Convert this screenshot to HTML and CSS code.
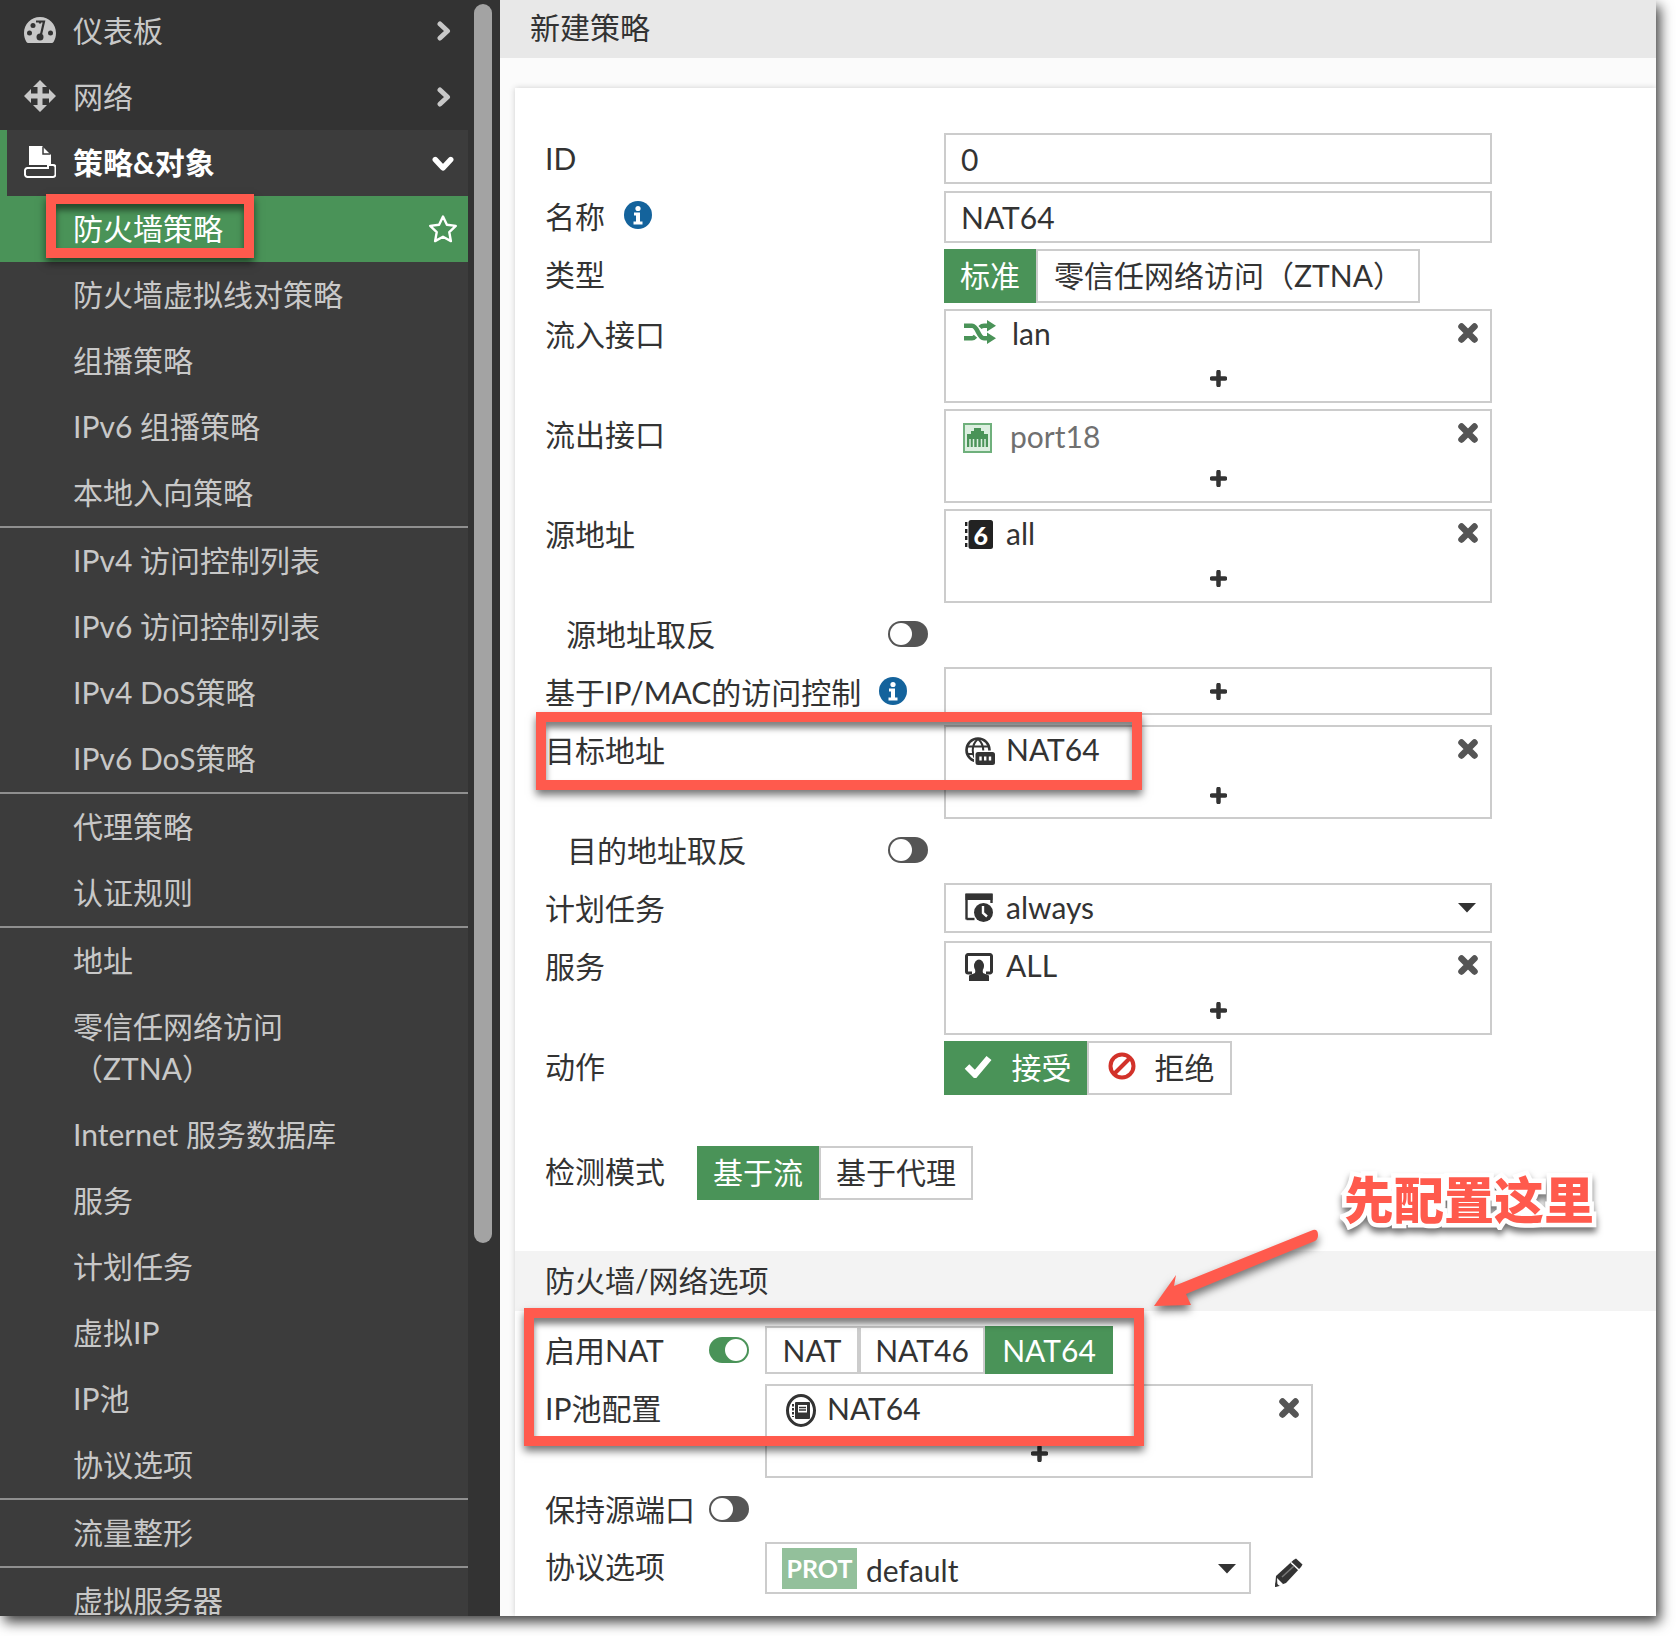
FILE: index.html
```html
<!DOCTYPE html>
<html lang="zh-CN">
<head>
<meta charset="utf-8">
<title>新建策略</title>
<link rel="stylesheet" href="styles.css">
</head>
<body>
<svg class="defs" width="0" height="0" aria-hidden="true">
  <symbol id="i-x" viewBox="0 0 22 22"><path d="M4.500 4.500l13 13M17.500 4.500l-13 13" fill="none" stroke="#555" stroke-width="6.500" stroke-linecap="round"/></symbol>
  <symbol id="i-plus" viewBox="0 0 17 17"><path d="M8.500 2v13M2 8.500h13" stroke="#333" stroke-width="4.500" stroke-linecap="round" fill="none"/></symbol>
  <symbol id="i-chev" viewBox="0 0 14 20"><path d="M3 3l7.500 7-7.500 7" fill="none" stroke="currentColor" stroke-width="5" stroke-linecap="round" stroke-linejoin="round"/></symbol>
  <symbol id="i-info" viewBox="0 0 28 28"><circle cx="14" cy="14" r="14" fill="#14639c"/><circle cx="14" cy="7.500" r="2.600" fill="#fff"/><path d="M10 11.500h6v9h2.500v3h-9v-3H12v-6h-2z" fill="#fff"/></symbol>
  <symbol id="i-globe" viewBox="0 0 30 28"><circle cx="13" cy="13" r="11.500" fill="#fff" stroke="#333" stroke-width="2.600"/><path d="M2 9.500h22M3 17h20M13 2c-7 6-7 16 0 23M13 2c7 6 7 16 0 23" fill="none" stroke="#333" stroke-width="2"/><rect x="9" y="13.500" width="21" height="14.500" rx="2.500" fill="#fff"/><rect x="10.500" y="15" width="19.500" height="13" rx="2.500" fill="#333"/><path d="M15.500 19.500v4M20.200 19.500v4M25 19.500v4" stroke="#fff" stroke-width="2.400"/></symbol>
  <symbol id="i-caret" viewBox="0 0 20 11"><path d="M1 1h18l-9 9.500z" fill="#333"/></symbol>
</svg>
<div class="window">
  <nav class="sidebar">
    <div class="menu">
      <a class="item top"><svg class="mi" viewBox="0 0 32 26"><path d="M16 0C7 0 0 7.200 0 16c0 3.300.9 6.300 2.300 8.800.4.800 1.100 1.200 2 1.200h23.400c.9 0 1.600-.4 2-1.200C31.100 22.300 32 19.300 32 16 32 7.200 25 0 16 0z" fill="#c8c8c8"/><circle cx="5.500" cy="16" r="2.500" fill="#333"/><circle cx="9" cy="8.500" r="2.500" fill="#333"/><circle cx="26.500" cy="16" r="2.500" fill="#333"/><path d="M16 3.500v3M12 4.500h8l-3 13" stroke="#333" stroke-width="2.200" fill="none"/><circle cx="16" cy="20" r="3.500" fill="#333"/></svg><span>仪表板</span><svg class="chev"><use href="#i-chev"/></svg></a>
      <a class="item top"><svg class="mi" viewBox="0 0 32 32"><path d="M16 0l7 7h-4.500v6.500H25V9l7 7-7 7v-4.500h-6.500V25H23l-7 7-7-7h4.500v-6.500H7V23l-7-7 7-7v4.500h6.500V7H9z" fill="#c8c8c8"/></svg><span>网络</span><svg class="chev"><use href="#i-chev"/></svg></a>
      <a class="item open"><svg class="mi" viewBox="0 0 32 32"><path d="M5 0h13l9 9v10H5z" fill="#fff"/><path d="M19 1v7h7" fill="none" stroke="#3b3b3b" stroke-width="1.500"/><path d="M24 19h5a2.500 2.500 0 0 1 2.500 2.500v7a2.500 2.500 0 0 1-2.500 2.500H3.500A2.500 2.500 0 0 1 1 28.500v-4A2.500 2.500 0 0 1 3.500 22H24z" fill="none" stroke="#fff" stroke-width="2"/></svg><span>策略&amp;对象</span><svg class="chev down"><use href="#i-chev"/></svg></a>
      <a class="item sub active"><span>防火墙策略</span><svg class="star" viewBox="0 0 30 30"><path d="M15 2.500l3.900 8.200 8.900 1.200-6.500 6.300 1.600 8.900L15 22.800l-7.900 4.300 1.600-8.900-6.500-6.300 8.900-1.200z" fill="none" stroke="#fff" stroke-width="2.400" stroke-linejoin="round"/></svg></a>
      <a class="item sub">防火墙虚拟线对策略</a>
      <a class="item sub">组播策略</a>
      <a class="item sub">IPv6 组播策略</a>
      <a class="item sub">本地入向策略</a>
      <hr class="sep">
      <a class="item sub">IPv4 访问控制列表</a>
      <a class="item sub">IPv6 访问控制列表</a>
      <a class="item sub">IPv4 DoS策略</a>
      <a class="item sub">IPv6 DoS策略</a>
      <hr class="sep">
      <a class="item sub">代理策略</a>
      <a class="item sub">认证规则</a>
      <hr class="sep">
      <a class="item sub">地址</a>
      <a class="item sub two">零信任网络访问<br>（ZTNA）</a>
      <a class="item sub">Internet 服务数据库</a>
      <a class="item sub">服务</a>
      <a class="item sub">计划任务</a>
      <a class="item sub">虚拟IP</a>
      <a class="item sub">IP池</a>
      <a class="item sub">协议选项</a>
      <hr class="sep">
      <a class="item sub">流量整形</a>
      <hr class="sep">
      <a class="item sub">虚拟服务器</a>
    </div>
    <div class="scrollbar"></div>
  </nav>
  <main class="main">
    <header class="head">新建策略</header>
    <section class="card">
      <div class="row h51"><label class="lbl p2">ID</label><div class="field f-text">0</div></div>
      <div class="row h52"><label class="lbl p2">名称 <svg class="info i-name"><use href="#i-info"/></svg></label><div class="field f-text">NAT64</div></div>
      <div class="row h54"><label class="lbl">类型</label>
        <div class="seg"><span class="btn on w92">标准</span><span class="btn rest ztna">零信任网络访问（ZTNA）</span></div></div>
      <div class="row multi"><label class="lbl">流入接口</label><div class="field box">
        <div class="line"><svg class="ic shuffle" viewBox="0 0 32 24"><path d="M0 5.700h8c6 0 6 12.600 12 12.600h5M0 18.300h8c1.500 0 2.500-.8 3.500-2M16 7.500c1-1 2.500-1.800 4-1.800h5" fill="none" stroke="#4a9358" stroke-width="4.500"/><path d="M23 0l9 5.700-9 5.700zM23 12.600l9 5.700-9 5.700z" fill="#4a9358"/></svg><span class="t lan">lan</span><svg class="x"><use href="#i-x"/></svg></div>
        <div class="add"><svg class="plus"><use href="#i-plus"/></svg></div></div></div>
      <div class="row multi"><label class="lbl">流出接口</label><div class="field box">
        <div class="line l-port"><svg class="ic port" viewBox="0 0 29 30"><rect x="1" y="1" width="27" height="28" fill="#dcefe0" stroke="#6fb07c" stroke-width="2"/><path d="M4 24V11h4V8h3V5h7v3h3v3h4v13z" fill="#4a9358"/><path d="M7 16v8M10.500 16v8M14.500 16v8M18.500 16v8M22 16v8" stroke="#dcefe0" stroke-width="1.500"/></svg><span class="t gray">port18</span><svg class="x x-hi"><use href="#i-x"/></svg></div>
        <div class="add a-port"><svg class="plus"><use href="#i-plus"/></svg></div></div></div>
      <div class="row multi"><label class="lbl">源地址</label><div class="field box">
        <div class="line"><svg class="ic six" viewBox="0 0 28 29"><path d="M1.200 2v25" stroke="#222" stroke-width="2.400" stroke-dasharray="4 3"/><rect x="3.500" y="0" width="24.500" height="29" rx="2.500" fill="#222"/><text x="15.700" y="24.500" class="six-t">6</text></svg><span class="t near">all</span><svg class="x"><use href="#i-x"/></svg></div>
        <div class="add"><svg class="plus"><use href="#i-plus"/></svg></div></div></div>
      <div class="row tog-row"><label class="lbl indent dn1">源地址取反</label><span class="toggle"></span></div>
      <div class="row h48 ipmac"><label class="lbl dn2">基于IP/MAC的访问控制 <svg class="info i-mac"><use href="#i-info"/></svg></label><div class="field add-only"><svg class="plus"><use href="#i-plus"/></svg></div></div>
      <div class="row multi"><label class="lbl">目标地址</label><div class="field box">
        <div class="line"><svg class="ic globe"><use href="#i-globe"/></svg><span class="t near n-dest">NAT64</span><svg class="x"><use href="#i-x"/></svg></div>
        <div class="add a-dest"><svg class="plus"><use href="#i-plus"/></svg></div></div></div>
      <div class="row tog-row t2"><label class="lbl indent2 p0">目的地址取反</label><span class="toggle"></span></div>
      <div class="row h50 sched"><label class="lbl p0">计划任务</label><div class="field select">
        <svg class="ic" viewBox="0 0 28 30"><path d="M1.500 26.500V2h25v8" fill="none" stroke="#333" stroke-width="2.400"/><path d="M0.500 0.500h27v6.500H0.500z" fill="#333"/><path d="M1.500 26h8" stroke="#333" stroke-width="2.400"/><circle cx="18.500" cy="19.500" r="9.500" fill="#333"/><path d="M18 13v7l4 3.500" stroke="#fff" stroke-width="2.400" fill="none"/></svg><span class="t near t-sel">always</span><svg class="caret"><use href="#i-caret"/></svg></div></div>
      <div class="row multi"><label class="lbl">服务</label><div class="field box">
        <div class="line"><svg class="ic" viewBox="0 0 28 28"><path d="M7 20H3a1.500 1.500 0 0 1-1.500-1.500V3A1.500 1.500 0 0 1 3 1.500h22A1.500 1.500 0 0 1 26.500 3v15.500A1.500 1.500 0 0 1 25 20h-4" fill="none" stroke="#333" stroke-width="3"/><ellipse cx="14" cy="13" rx="5" ry="6.500" fill="#333"/><path d="M10.500 17l-.5 3-6 2.500V28h20v-5.500L18 20l-.5-3z" fill="#333"/></svg><span class="t near t-all">ALL</span><svg class="x"><use href="#i-x"/></svg></div>
        <div class="add"><svg class="plus"><use href="#i-plus"/></svg></div></div></div>
      <div class="row h54"><label class="lbl">动作</label>
        <div class="seg"><span class="btn on accept"><svg class="check" viewBox="0 0 28 24"><path d="M3 12.500l8 8L25 4" fill="none" stroke="#fff" stroke-width="6.500"/></svg>接受</span><span class="btn rest deny"><svg class="ban" viewBox="0 0 28 28"><circle cx="14" cy="14" r="11.500" fill="none" stroke="#d2322a" stroke-width="4"/><path d="M6 22L22 6" stroke="#d2322a" stroke-width="4"/></svg>拒绝</span></div></div>
      <div class="row h54 detect"><label class="lbl w152">检测模式</label>
        <div class="seg"><span class="btn on flow">基于流</span><span class="btn rest proxy">基于代理</span></div></div>
      <h2 class="band">防火墙/网络选项</h2>
      <div class="row h48 low"><label class="lbl w220 p0">启用NAT<span class="toggle on nat-tog"></span></label>
        <div class="seg nat"><span class="btn rest w94">NAT</span><span class="btn rest w126">NAT46</span><span class="btn on w128">NAT64</span></div></div>
      <div class="row multi low2"><label class="lbl w220 up3">IP池配置</label><div class="field box pool">
        <div class="line"><svg class="ic pool-i" viewBox="0 0 30 33"><ellipse cx="15" cy="16.500" rx="13.500" ry="15" fill="none" stroke="#333" stroke-width="3"/><rect x="9" y="8" width="15" height="17" rx="1" fill="#333"/><rect x="12" y="11" width="9" height="7.500" fill="#fff"/><path d="M13 13.500h7M13 16h7" stroke="#333" stroke-width="1.400"/><path d="M7 10v13" stroke="#333" stroke-width="2" stroke-dasharray="2.500 1.500"/></svg><span class="t near t-pool">NAT64</span><svg class="x"><use href="#i-x"/></svg></div>
        <div class="add"><svg class="plus"><use href="#i-plus"/></svg></div></div></div>
      <div class="row tog-row t3"><label class="lbl w164 p0">保持源端口</label><span class="toggle"></span></div>
      <div class="row h52 proto-row"><label class="lbl w220">协议选项</label><div class="field select proto"><span class="prot">PROT</span><span class="t def">default</span><svg class="caret"><use href="#i-caret"/></svg></div><svg class="pencil" viewBox="0 0 30 30"><path d="M19.500 2L22 .5l6.500 6L27 9 12 25 1 29l1-11z" fill="#333"/><path d="M17 4.500l8 7.500" stroke="#fff" stroke-width="1.600"/><path d="M8 19L20 8" stroke="#777" stroke-width="1.600"/><path d="M3 20l6.500 6.500L3.500 28z" fill="#fff"/><path d="M1 29l.5-4.500 4 3.500z" fill="#333"/></svg></div>
    </section>
  </main>
  <div class="mark m1"></div>
  <div class="mark m2"></div>
  <div class="mark m3"></div>
  <svg class="arrow" viewBox="0 0 180 90"><path d="M4 80L26 49 24 60 163 4Q168 3 168 9 168 13 165 15L36 68 41 79z" fill="#ff5a4d"/></svg>
  <div class="callout">先配置这里</div>
</div>
</body>
</html>
```
FILE: styles.css
```css
* { box-sizing: border-box; }
html, body { margin: 0; padding: 0; background: #fff; }
body { font-family: Lato, "Noto Sans CJK SC", sans-serif; font-size: 30px; color: #333; width: 1676px; height: 1636px; overflow: hidden; }
.defs { position: absolute; }
.window { position: relative; display: flex; width: 1656px; height: 1616px; box-shadow: 4px 6px 12px rgba(0,0,0,.75); }

.sidebar { position: relative; flex: 0 0 500px; height: 1616px; background: #333; overflow: hidden; }
.menu { width: 468px; margin-top: -2px; }
.item { display: flex; align-items: center; height: 66px; padding: 0 0 2px 73px; color: #c8c8c8; background: #3c3c3c; line-height: 42px; position: relative; }
.item.top { background: #333; padding-left: 24px; }
.item.top span, .item.open span { margin-left: 17px; }
.item.open { padding-left: 24px; color: #fff; font-weight: 700; box-shadow: inset 7px 0 0 #4a9358; }
.item.sub.active { background: #4a9358; color: #fff; }
.item.two { height: 108px; display: block; padding-top: 11px; }
.mi { width: 32px; height: 32px; flex: none; }
.chev { width: 14px; height: 20px; position: absolute; left: 437px; top: 23px; color: #c8c8c8; }
.chev.down { transform: rotate(90deg) scale(1.1); color: #fff; left: 436px; top: 24px; }
.star { width: 30px; height: 30px; position: absolute; left: 428px; top: 18px; }
.sep { display: block; height: 2px; margin: 0; border: 0; background: #8f8f8f; }
.scrollbar { position: absolute; left: 474px; top: 4px; width: 18px; height: 1239px; border-radius: 9px; background: #a3a3a3; }

.main { flex: 1; display: flex; flex-direction: column; height: 1616px; background: #fbfbfb; overflow: hidden; }
.head { flex: 0 0 58px; padding-left: 30px; line-height: 54px; background: #e8e8e8; }
.card { flex: 1; margin: 30px 0 0 15px; padding: 45px 0 0 30px; background: #fff; box-shadow: 0 0 6px rgba(0,0,0,.18); }

.row { display: flex; align-items: center; margin-bottom: 6px; }
.h48 { height: 48px; } .h50 { height: 50px; } .h51 { height: 51px; margin-bottom: 7px; } .h52 { height: 52px; } .h54 { height: 54px; }
.ipmac { margin-bottom: 10px; }
.sched { margin-bottom: 8px; }
.multi { align-items: flex-start; height: 94px; }
.lbl { flex: 0 0 399px; display: flex; align-items: center; line-height: 54px; padding-bottom: 4px; white-space: pre; }
.p0 { padding-bottom: 0; } .p2 { padding-bottom: 2px; }
.dn1 { padding: 0 0 0 21px; } .dn2 { padding: 2px 0 0; }
.multi .lbl { padding-bottom: 0; margin-top: -2px; }
.multi .up3 { margin-top: -3px; }
.w152 { flex-basis: 152px; } .w220 { flex-basis: 220px; } .w164 { flex-basis: 164px; }
.indent { padding-left: 21px; flex-basis: 343px; } .indent2 { padding-left: 22px; flex-basis: 343px; }
.info { width: 28px; height: 28px; }
.i-name { margin-left: 11px; margin-top: -2px; }
.i-mac { margin-left: 10px; margin-top: -3px; }
.field { width: 548px; height: 100%; border: 2px solid #ccc; background: #fff; }
.f-text { padding-left: 15px; line-height: 48px; }
.box { display: flex; flex-direction: column; }
.line { display: flex; align-items: center; height: 48px; padding: 0 11px 0 19px; position: relative; }
.l-port { height: 54px; }
.add { flex: 1; display: flex; justify-content: center; }
.a-port { margin-top: -6px; }
.a-dest { padding-top: 1px; }
.add-only { display: flex; align-items: center; justify-content: center; }
.ic { width: 28px; height: 30px; flex: none; }
.shuffle { width: 32px; height: 24px; margin: -6px 0 0 -1px; }
.port { width: 29px; height: 30px; margin: 0 0 0 -2px; }
.six { height: 29px; margin-top: -2px; }
.globe { width: 30px; height: 28px; }
.six-t { font: 900 25px Lato, sans-serif; fill: #fff; text-anchor: middle; }
.t { line-height: 40px; padding-bottom: 4px; }
.lan { margin-left: 16px; }
.gray { margin-left: 18px; color: #707070; }
.near { margin-left: 13px; }
.n-dest { margin-left: 11px; }
.t-sel { padding-bottom: 2px; }
.t-all { padding-bottom: 5px; }
.t-pool { margin-left: 11px; }
.x { width: 22px; height: 22px; margin-left: auto; margin-top: -4px; }
.x-hi { margin-top: -10px; }
.plus { width: 17px; height: 17px; }
.add .plus { margin-top: 11px; }

.seg { display: flex; height: 100%; }
.btn { display: flex; align-items: center; justify-content: center; padding-bottom: 4px; border: 2px solid #ccc; background: #fff; white-space: nowrap; }
.btn.on { background: #4a9358; border-color: #4a9358; color: #fff; }
.w92 { width: 92px; }
.ztna { width: 384px; justify-content: flex-start; padding-left: 16px; }
.accept { width: 143px; padding-left: 4px; }
.check { width: 28px; height: 24px; margin-right: 20px; }
.deny { width: 145px; padding-left: 3px; }
.ban { width: 28px; height: 28px; margin-right: 19px; }
.flow { width: 122px; } .proxy { width: 154px; }
.detect { margin-top: 51px; margin-bottom: 51px; }
.band { margin: 0 0 15px -30px; height: 60px; padding-left: 30px; font-size: 30px; font-weight: 400; line-height: 59px; background: #f3f3f3; }

.tog-row { height: 26px; margin-top: 18px; margin-bottom: 20px; }
.toggle { flex: none; position: relative; display: inline-block; width: 40px; height: 26px; border-radius: 13px; background: #555; }
.toggle::after { content: ""; position: absolute; left: 2px; top: 2px; width: 22px; height: 22px; border-radius: 50%; background: #fff; }
.toggle.on { background: #4a9358; }
.toggle.on::after { left: 16px; }
.nat-tog { margin-left: 45px; }
.low { margin-bottom: 10px; }
.low2 { height: 94px; margin-bottom: 0; }
.nat { height: 48px; }
.nat .btn { padding-bottom: 0; }
.w94 { width: 94px; } .w126 { width: 126px; } .w128 { width: 128px; }
.pool-i { width: 30px; height: 33px; }

.select { display: flex; align-items: center; padding: 0 11px 0 19px; }
.caret { width: 20px; height: 11px; margin: 0 2px 2px auto; }
.proto { width: 486px; padding-left: 15px; }
.proto .caret { margin-right: 1px; margin-bottom: 0; }
.prot { display: block; width: 75px; height: 41px; background: #93c09b; color: #fff; font-weight: 700; font-size: 25px; line-height: 41px; text-align: center; }
.def { margin-left: 9px; padding: 4px 0 0; }
.pencil { width: 30px; height: 30px; margin: 10px 0 0 23px; flex: none; }

.mark { position: absolute; border: 10px solid #ff5a4d; box-shadow: 0 5px 8px rgba(0,0,0,.55), inset 0 6px 6px rgba(0,0,0,.5); }
.m1 { left: 46px; top: 194px; width: 208px; height: 64px; }
.m2 { left: 536px; top: 712px; width: 606px; height: 78px; }
.m3 { left: 524px; top: 1308px; width: 620px; height: 138px; }
.arrow { position: absolute; left: 1150px; top: 1226px; width: 180px; height: 90px; filter: drop-shadow(0 5px 4px rgba(0,0,0,.55)); }
.callout { position: absolute; left: 1344px; top: 1166px; font-size: 50px; font-weight: 900; line-height: 68px; color: #ff5a4d; white-space: nowrap; -webkit-text-stroke: 9px #fff; paint-order: stroke fill; filter: drop-shadow(0 5px 3px rgba(0,0,0,.55)); }
```
